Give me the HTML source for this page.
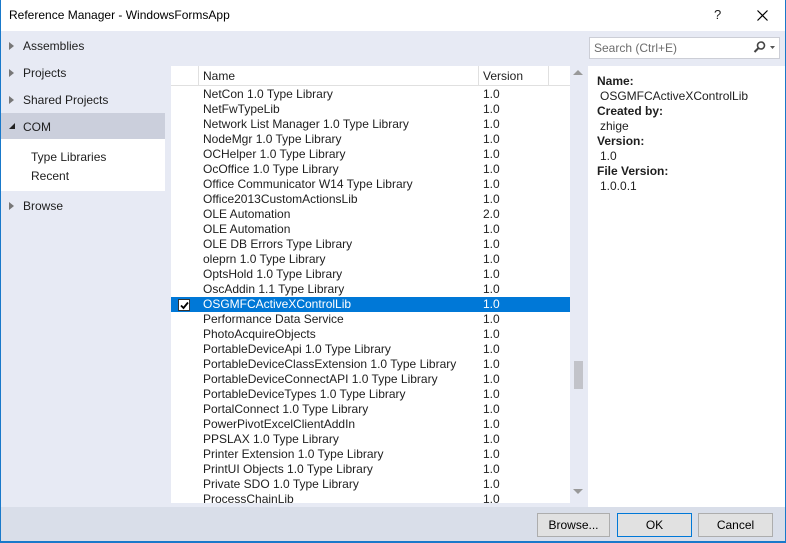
<!DOCTYPE html>
<html><head><meta charset="utf-8"><style>
*{margin:0;padding:0;box-sizing:border-box}
body{width:786px;height:543px;overflow:hidden;font-family:"Liberation Sans",sans-serif;font-size:12px;color:#1e1e1e;background:#fff;position:relative}
.abs{position:absolute}
#win{position:absolute;left:0;top:0;width:786px;height:543px;border:1px solid #1979ca;border-top:none}
#title{left:1px;top:0;width:784px;height:31px;background:#fff}
#title .t{left:8px;top:8px;font-size:12px;color:#000}
#body{left:1px;top:31px;width:784px;height:476px;background:#e7eaf4}
.nav{left:23px;font-size:12px}
.tri{left:9px;width:0;height:0;border-top:4px solid transparent;border-bottom:4px solid transparent;border-left:5px solid #777}
#list{left:171px;top:66px;width:399px;height:437px;background:#fff;overflow:hidden}
.hdr{left:0;top:0;width:399px;height:20px;border-bottom:1px solid #e0e0e0;background:#fff}
.row{position:absolute;left:0;width:399px;height:15px;line-height:15px}
.row .n{position:absolute;left:32px}
.row .v{position:absolute;left:312px}
.sel{background:#0078d7;color:#fff}
#sb{left:570px;top:66px;width:17px;height:437px;background:#e7eaf4}
#det{left:588px;top:66px;width:197px;height:441px;background:#fff}
#det div{line-height:15px}
.b{font-weight:bold}
#bot{left:1px;top:507px;width:784px;height:35px;background:#d9dee9}
.btn{position:absolute;top:513px;height:24px;background:#e1e1e1;border:1px solid #adadad;text-align:center;line-height:22px;font-size:12px;color:#000}
</style></head><body>
<div id="win"></div>
<div id="title" class="abs"><div class="t abs">Reference Manager - WindowsFormsApp</div>
<div class="abs" style="left:713px;top:7px;font-size:13px">?</div>
<svg class="abs" style="left:756px;top:10px" width="11" height="11"><path d="M0.5 0.5L10.5 10.5M10.5 0.5L0.5 10.5" stroke="#000" stroke-width="1.2"/></svg>
</div>
<div id="body" class="abs"></div>
<div class="tri abs" style="top:42px"></div><div class="nav abs" style="top:39px">Assemblies</div>
<div class="tri abs" style="top:69px"></div><div class="nav abs" style="top:66px">Projects</div>
<div class="tri abs" style="top:96px"></div><div class="nav abs" style="top:93px">Shared Projects</div>
<div class="abs" style="left:1px;top:113px;width:164px;height:26px;background:#cbcfdc"></div>
<svg class="abs" style="left:9px;top:123px" width="7" height="7"><path d="M6 0L6 6L0 6Z" fill="#222"/></svg>
<div class="nav abs" style="top:120px">COM</div>
<div class="abs" style="left:1px;top:139px;width:164px;height:52px;background:#fff"></div>
<div class="abs" style="left:31px;top:150px">Type Libraries</div>
<div class="abs" style="left:31px;top:169px">Recent</div>
<div class="tri abs" style="top:202px"></div><div class="nav abs" style="top:199px">Browse</div>

<div class="abs" style="left:589px;top:37px;width:191px;height:22px;background:#fff;border:1px solid #ccced6"></div>
<div class="abs" style="left:594px;top:41px;color:#6d6d6d">Search (Ctrl+E)</div>
<svg class="abs" style="left:753px;top:40px" width="26" height="14"><circle cx="8" cy="5.5" r="3.5" fill="none" stroke="#444" stroke-width="1.6"/><path d="M5.5 8L1.5 12" stroke="#444" stroke-width="2"/><path d="M17 6L22 6L19.5 9Z" fill="#555"/></svg>

<div id="list" class="abs">
<div class="hdr abs"></div>
<div class="abs" style="left:27px;top:0;width:1px;height:20px;background:#e0e0e0"></div>
<div class="abs" style="left:307px;top:0;width:1px;height:20px;background:#e0e0e0"></div>
<div class="abs" style="left:377px;top:0;width:1px;height:20px;background:#e0e0e0"></div>
<div class="abs" style="left:32px;top:3px">Name</div>
<div class="abs" style="left:312px;top:3px">Version</div>
<div class="abs" style="left:0;top:21px;width:399px">
<div class="row" style="top:0"><span class="n">NetCon 1.0 Type Library</span><span class="v">1.0</span></div>
<div class="row" style="top:15px"><span class="n">NetFwTypeLib</span><span class="v">1.0</span></div>
<div class="row" style="top:30px"><span class="n">Network List Manager 1.0 Type Library</span><span class="v">1.0</span></div>
<div class="row" style="top:45px"><span class="n">NodeMgr 1.0 Type Library</span><span class="v">1.0</span></div>
<div class="row" style="top:60px"><span class="n">OCHelper 1.0 Type Library</span><span class="v">1.0</span></div>
<div class="row" style="top:75px"><span class="n">OcOffice 1.0 Type Library</span><span class="v">1.0</span></div>
<div class="row" style="top:90px"><span class="n">Office Communicator W14 Type Library</span><span class="v">1.0</span></div>
<div class="row" style="top:105px"><span class="n">Office2013CustomActionsLib</span><span class="v">1.0</span></div>
<div class="row" style="top:120px"><span class="n">OLE Automation</span><span class="v">2.0</span></div>
<div class="row" style="top:135px"><span class="n">OLE Automation</span><span class="v">1.0</span></div>
<div class="row" style="top:150px"><span class="n">OLE DB Errors Type Library</span><span class="v">1.0</span></div>
<div class="row" style="top:165px"><span class="n">oleprn 1.0 Type Library</span><span class="v">1.0</span></div>
<div class="row" style="top:180px"><span class="n">OptsHold 1.0 Type Library</span><span class="v">1.0</span></div>
<div class="row" style="top:195px"><span class="n">OscAddin 1.1 Type Library</span><span class="v">1.0</span></div>
<div class="row sel" style="top:210px"><span style="position:absolute;left:7px;top:2px;width:12px;height:12px;background:#fff;border:1px solid #333"></span><svg style="position:absolute;left:8px;top:3px" width="11" height="11"><path d="M2 5.5L4.5 8L9 2.5" stroke="#000" stroke-width="1.8" fill="none"/></svg><span class="n">OSGMFCActiveXControlLib</span><span class="v">1.0</span></div>
<div class="row" style="top:225px"><span class="n">Performance Data Service</span><span class="v">1.0</span></div>
<div class="row" style="top:240px"><span class="n">PhotoAcquireObjects</span><span class="v">1.0</span></div>
<div class="row" style="top:255px"><span class="n">PortableDeviceApi 1.0 Type Library</span><span class="v">1.0</span></div>
<div class="row" style="top:270px"><span class="n">PortableDeviceClassExtension 1.0 Type Library</span><span class="v">1.0</span></div>
<div class="row" style="top:285px"><span class="n">PortableDeviceConnectAPI 1.0 Type Library</span><span class="v">1.0</span></div>
<div class="row" style="top:300px"><span class="n">PortableDeviceTypes 1.0 Type Library</span><span class="v">1.0</span></div>
<div class="row" style="top:315px"><span class="n">PortalConnect 1.0 Type Library</span><span class="v">1.0</span></div>
<div class="row" style="top:330px"><span class="n">PowerPivotExcelClientAddIn</span><span class="v">1.0</span></div>
<div class="row" style="top:345px"><span class="n">PPSLAX 1.0 Type Library</span><span class="v">1.0</span></div>
<div class="row" style="top:360px"><span class="n">Printer Extension 1.0 Type Library</span><span class="v">1.0</span></div>
<div class="row" style="top:375px"><span class="n">PrintUI Objects 1.0 Type Library</span><span class="v">1.0</span></div>
<div class="row" style="top:390px"><span class="n">Private SDO 1.0 Type Library</span><span class="v">1.0</span></div>
<div class="row" style="top:405px"><span class="n">ProcessChainLib</span><span class="v">1.0</span></div>
</div></div>
<div id="sb" class="abs"></div>
<svg class="abs" style="left:573px;top:70px" width="10" height="6"><path d="M0 5L5 0L10 5Z" fill="#999"/></svg>
<div class="abs" style="left:574px;top:361px;width:9px;height:28px;background:#c2c3c9"></div>
<svg class="abs" style="left:573px;top:489px" width="10" height="6"><path d="M0 0L10 0L5 5Z" fill="#999"/></svg>
<div id="det" class="abs">
<div style="position:absolute;left:9px;top:8px">
<div class="b">Name:</div><div style="padding-left:3px">OSGMFCActiveXControlLib</div>
<div class="b">Created by:</div><div style="padding-left:3px">zhige</div>
<div class="b">Version:</div><div style="padding-left:3px">1.0</div>
<div class="b">File Version:</div><div style="padding-left:3px">1.0.0.1</div>
</div></div>
<div id="bot" class="abs"></div>
<div class="btn" style="left:537px;width:73px">Browse...</div>
<div class="btn" style="left:617px;width:75px;border-color:#0078d7">OK</div>
<div class="btn" style="left:698px;width:75px">Cancel</div>
<div class="abs" style="left:0;top:541px;width:786px;height:2px;background:#1979ca"></div>
</body></html>
